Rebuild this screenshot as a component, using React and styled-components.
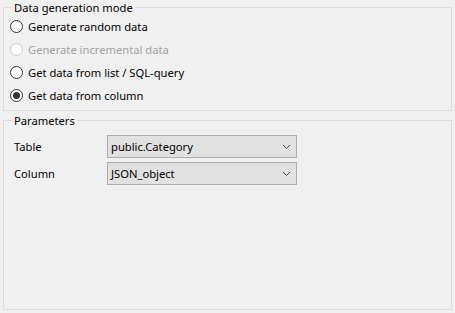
import React from 'react';
import styled, { createGlobalStyle } from 'styled-components';

const GlobalStyle = createGlobalStyle`
  html, body {
    margin: 0;
    padding: 0;
    background: #f0f0f0;
  }
  body {
    font-family: "Noto Sans", "Open Sans", sans-serif;
    font-size: 11.2px;
    color: #000;
  }
`;

const Page = styled.div`
  width: 455px;
  height: 313px;
  box-sizing: border-box;
  padding: 0 3px;
  display: flex;
  flex-direction: column;
  gap: 2px;
  background: #f0f0f0;
`;

const Group = styled.fieldset`
  margin: 0;
  min-width: 0;
  border: 1px solid #dcdcdc;
  padding: ${({ $pad }) => $pad || '0 8px 3px 8px'};
  height: ${({ $height }) => $height}px;
  box-sizing: border-box;
  display: flex;
  flex-direction: column;
`;

const Legend = styled.legend`
  padding: 0 2px;
  line-height: 15px;
  height: 15px;
  font-size: 11.2px;
  color: #000;
`;

const RadioRow = styled.label`
  display: flex;
  align-items: center;
  height: 23px;
  gap: 5px;
  margin-left: -2px;
  color: ${({ $disabled }) => ($disabled ? '#a0a0a0' : '#000')};
  white-space: nowrap;
`;

const RadioDot = styled.span`
  width: 13px;
  height: 13px;
  box-sizing: border-box;
  border-radius: 50%;
  border: 1px solid ${({ $disabled }) => ($disabled ? '#cccccc' : '#333333')};
  background: #fff;
  display: flex;
  align-items: center;
  justify-content: center;
  flex-shrink: 0;

  &::after {
    content: '';
    width: 7px;
    height: 7px;
    border-radius: 50%;
    background: #333333;
    display: ${({ $checked }) => ($checked ? 'block' : 'none')};
  }
`;

const ParamRow = styled.div`
  display: flex;
  align-items: center;
  height: 23px;
  margin-bottom: 4px;
  margin-left: 2px;
`;

const ParamLabel = styled.span`
  width: 93px;
  flex-shrink: 0;
`;

const Combo = styled.div`
  width: 190px;
  height: 23px;
  box-sizing: border-box;
  border: 1px solid #adadad;
  background: #e1e1e1;
  display: flex;
  align-items: center;
  padding: 0 5px 0 3px;
  justify-content: space-between;
`;

const ComboText = styled.span`
  white-space: nowrap;
`;

const Chevron = () => (
  <svg width="9" height="6" viewBox="0 0 9 6">
    <path d="M1 1 L4.5 4.5 L8 1" fill="none" stroke="#444" strokeWidth="1" />
  </svg>
);

const Radio = ({ label, checked, disabled }) => (
  <RadioRow $disabled={disabled}>
    <RadioDot $checked={checked} $disabled={disabled} />
    {label}
  </RadioRow>
);

const Select = ({ value }) => (
  <Combo>
    <ComboText>{value}</ComboText>
    <Chevron />
  </Combo>
);

export default function App() {
  return (
    <>
      <GlobalStyle />
      <Page>
        <Group $height={111}>
          <Legend>Data generation mode</Legend>
          <Radio label="Generate random data" />
          <Radio label="Generate incremental data" disabled />
          <Radio label="Get data from list / SQL-query" />
          <Radio label="Get data from column" checked />
        </Group>
        <Group $height={197} $pad="7px 8px 3px 8px">
          <Legend>Parameters</Legend>
          <ParamRow>
            <ParamLabel>Table</ParamLabel>
            <Select value="public.Category" />
          </ParamRow>
          <ParamRow>
            <ParamLabel>Column</ParamLabel>
            <Select value="JSON_object" />
          </ParamRow>
        </Group>
      </Page>
    </>
  );
}
